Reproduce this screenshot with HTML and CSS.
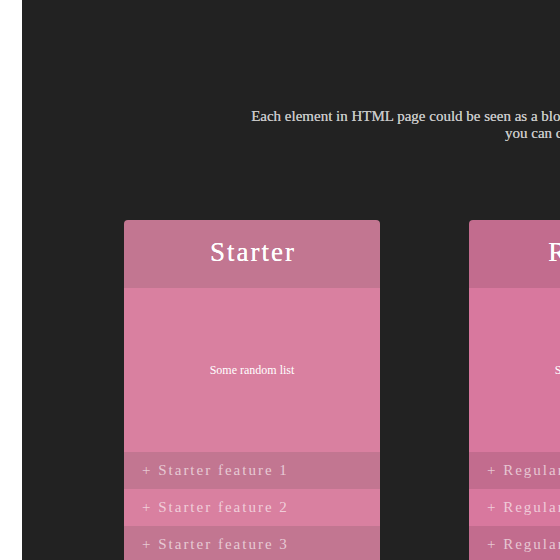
FILE: index.html
```html
<!DOCTYPE html>
<html>
<head>
<meta charset="utf-8">
<link rel="stylesheet" href="styles.css">
</head>
<body>
<div class="frame">
  <div class="page">
    <p class="intro">Each element in HTML page could be seen as a block, and with the help of its margin, padding and width properties<br>you can control the layout well.</p>
    <div class="plans">
      <div class="plan plan-a">
        <div class="plan-head">Starter</div>
        <div class="plan-body">Some random list</div>
        <ul class="features">
          <li>+ Starter feature 1</li>
          <li>+ Starter feature 2</li>
          <li>+ Starter feature 3</li>
          <li>+ Starter feature 4</li>
        </ul>
      </div>
      <div class="plan plan-b">
        <div class="plan-head">Regular</div>
        <div class="plan-body">Some random list</div>
        <ul class="features">
          <li>+ Regular feature 1</li>
          <li>+ Regular feature 2</li>
          <li>+ Regular feature 3</li>
          <li>+ Regular feature 4</li>
        </ul>
      </div>
      <div class="plan plan-c">
        <div class="plan-head">Premium</div>
        <div class="plan-body">Some random list</div>
        <ul class="features">
          <li>+ Premium feature 1</li>
          <li>+ Premium feature 2</li>
          <li>+ Premium feature 3</li>
          <li>+ Premium feature 4</li>
        </ul>
      </div>
    </div>
  </div>
</div>
</body>
</html>
```
FILE: styles.css
```css
html, body {
  margin: 0;
  padding: 0;
  background: #ffffff;
  overflow: hidden;
}
body {
  font-family: "Liberation Serif", "Times New Roman", serif;
}
.frame {
  margin-left: 22px;
  width: 538px;
  height: 560px;
  overflow: hidden;
  background: #222222;
}
.page {
  width: 1150px;
  padding-top: 108px;
}
.intro {
  margin: 0;
  padding-left: 6px;
  font-size: 15px;
  line-height: 17px;
  color: #c8c8c8;
  text-align: center;
  text-shadow: 0 0 0.3px #c8c8c8;
}
.plans {
  display: flex;
  justify-content: center;
  gap: 89px;
  margin-top: 78px;
}
.plan {
  width: 256px;
  border-radius: 4px 4px 0 0;
  overflow: hidden;
}
.plan-head {
  height: 68px;
  display: flex;
  align-items: center;
  justify-content: center;
  font-size: 27px;
  letter-spacing: 2px;
  color: #ffffff;
  padding: 0 0 3px 2px;
  box-sizing: border-box;
  text-shadow: 0 0 0.4px #ffffff;
}
.plan-body {
  height: 164px;
  display: flex;
  align-items: center;
  justify-content: center;
  font-size: 12px;
  color: #ffffff;
}
.features {
  list-style: none;
  margin: 0;
  padding: 0;
}
.features li {
  height: 37px;
  line-height: 37px;
  padding-left: 18px;
  font-size: 15px;
  letter-spacing: 2px;
  color: rgba(255, 255, 255, 0.62);
}
.plan-a .plan-head,
.plan-a .features li:nth-child(odd) {
  background: #c27691;
}
.plan-a .plan-body,
.plan-a .features li:nth-child(even) {
  background: #d980a0;
}
.plan-b .plan-head,
.plan-b .features li:nth-child(odd),
.plan-c .plan-head,
.plan-c .features li:nth-child(odd) {
  background: #c26c8e;
}
.plan-b .plan-body,
.plan-b .features li:nth-child(even),
.plan-c .plan-body,
.plan-c .features li:nth-child(even) {
  background: #d8789e;
}
```
